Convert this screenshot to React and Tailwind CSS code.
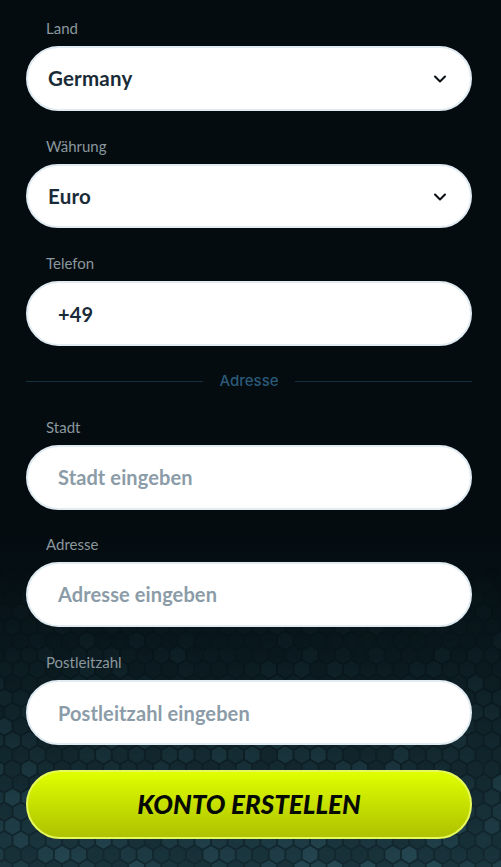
import { ChevronDown } from "lucide-react";

const font = "font-['Lato','Noto_Sans',sans-serif]";

// honeycomb behind the bottom of the form
function Hexes() {
  const cells = [];
  const r = 9.5;
  const dx = r * 1.74;
  const dy = r * 1.5;
  for (let row = 0; row < 25; row++) {
    for (let col = 0; col < 33; col++) {
      const cx = col * dx + (row % 2 ? dx / 2 : 0) - 4;
      const cy = row * dy + 4;
      const n = Math.sin(row * 12.9898 + col * 78.233) * 43758.5453;
      const rnd = n - Math.floor(n);
      let points = "";
      for (let i = 0; i < 6; i++) {
        const a = (Math.PI / 3) * i + Math.PI / 6;
        points += `${(cx + (r - 1) * Math.cos(a)).toFixed(1)},${(cy + (r - 1) * Math.sin(a)).toFixed(1)} `;
      }
      cells.push(<polygon key={`${row}-${col}`} points={points} fill="#2f5966" fillOpacity={0.2 + rnd * rnd * 0.45} />);
    }
  }
  return (
    <svg width="501" height="330" className="absolute left-0 bottom-0 [mask-image:linear-gradient(to_bottom,transparent_8%,rgba(0,0,0,0.35)_50%,black)]">
      {cells}
    </svg>
  );
}

function Field({ label, mb = "mb-[27px]", children }) {
  return (
    <div className={mb}>
      <label className={`block h-[26px] pl-5 text-[15px] font-normal leading-[16px] text-[#8a979d] ${font}`}>{label}</label>
      {children}
    </div>
  );
}

function SelectBox({ value }) {
  return (
    <div className="flex h-[64.67px] items-center justify-between rounded-full border-2 border-[#e0ebf2] bg-white pl-5 pr-5">
      <span className={`text-[20.5px] font-bold tracking-[0.2px] text-[#1a2b38] ${font}`}>{value}</span>
      <ChevronDown size={20} strokeWidth={2.5} className="mt-[2px] text-[#0c1116]" />
    </div>
  );
}

function TextBox({ value, placeholder }) {
  return (
    <input
      readOnly
      value={value}
      placeholder={placeholder}
      className={`block h-[64.67px] w-full rounded-full border-2 border-[#e0ebf2] bg-white pl-[30px] pr-5 text-[20px] font-bold tracking-[0.1px] text-[#1a2b38] outline-none placeholder:text-[#8b9ca8] ${font}`}
    />
  );
}

export default function App() {
  return (
    <div className="relative h-[867px] w-[501px] overflow-hidden bg-[#040c10]">
      <div className="absolute inset-x-0 bottom-0 h-[330px] bg-gradient-to-b from-[#040c10] to-[#13282f]" />
      <Hexes />
      <div className="relative pl-[26px] pr-[29px] pt-5">
        <Field label="Land"><SelectBox value="Germany" /></Field>
        <Field label="Währung"><SelectBox value="Euro" /></Field>
        <Field label="Telefon"><TextBox value="+49" /></Field>

        <div className="mb-[29px] flex h-[17px] items-center gap-4">
          <div className="h-px flex-1 bg-[#15303f]" />
          <span className="font-['Inter',sans-serif] text-[15px] font-medium text-[#2b5a78]">Adresse</span>
          <div className="h-px flex-1 bg-[#15303f]" />
        </div>

        <Field label="Stadt" mb="mb-[26.5px]"><TextBox value="" placeholder="Stadt eingeben" /></Field>
        <Field label="Adresse" mb="mb-[27.5px]"><TextBox value="" placeholder="Adresse eingeben" /></Field>
        <Field label="Postleitzahl" mb="mb-[25px]"><TextBox value="" placeholder="Postleitzahl eingeben" /></Field>

        <button className={`h-[69px] w-full rounded-full border-2 border-[#e6f95c] bg-gradient-to-b from-[#e0ff00] to-[#aec200] text-[26px] font-black italic text-[#060a04] ${font}`}>
          KONTO ERSTELLEN
        </button>
      </div>
    </div>
  );
}
